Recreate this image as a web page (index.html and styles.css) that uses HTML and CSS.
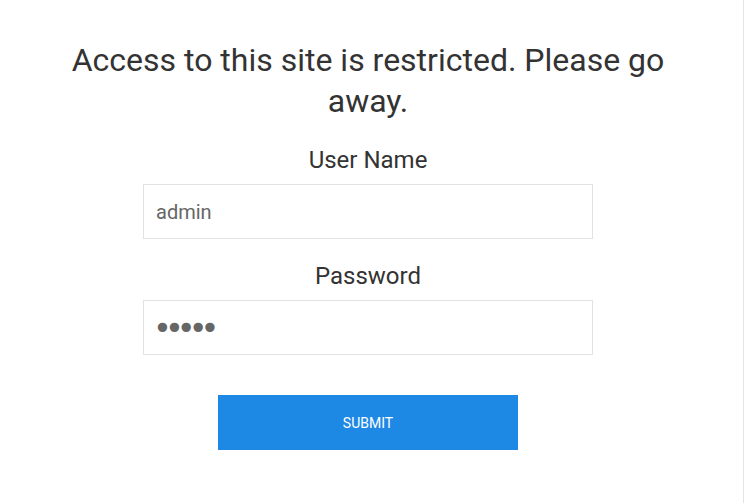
FILE: index.html
```html
<!DOCTYPE html>
<html lang="en">
<head>
<meta charset="utf-8">
<title>Restricted</title>
<link rel="stylesheet" href="styles.css">
</head>
<body>
<main class="page">
  <h1 class="title">Access to this site is restricted. Please go away.</h1>
  <form class="form" onsubmit="return false;">
    <label class="label" for="user">User Name</label>
    <input class="field" id="user" type="text" value="admin">
    <label class="label" for="pass">Password</label>
    <input class="field field-pass" id="pass" type="password" value="admin">
    <button class="submit" type="submit">SUBMIT</button>
  </form>
</main>
</body>
</html>
```
FILE: styles.css
```css
html, body {
  margin: 0;
  padding: 0;
  background: #ffffff;
}
body {
  font-family: Roboto, "Liberation Sans", sans-serif;
  color: #333333;
  min-height: 100vh;
  width: 743px;
  border-right: 1px solid #e4e4e4;
}
.page {
  width: 736px;
  display: flex;
  flex-direction: column;
  align-items: center;
  text-align: center;
  padding-top: 40px;
}
.title {
  margin: 0;
  max-width: 640px;
  font-size: 32px;
  font-weight: 400;
  line-height: 41px;
}
.form {
  width: 450px;
  display: flex;
  flex-direction: column;
  align-items: center;
  margin-top: 24px;
}
.label {
  display: block;
  font-size: 24px;
  line-height: 28px;
  margin-bottom: 10px;
}
.field {
  box-sizing: border-box;
  width: 450px;
  height: 55px;
  border: 1px solid #e2e2e2;
  border-radius: 0;
  padding: 0 12px;
  font-family: Roboto, "Liberation Sans", sans-serif;
  font-size: 20px;
  color: #666666;
  outline: none;
  margin-bottom: 23px;
  background: #fff;
}
.field-pass {
  font-family: "DejaVu Sans", sans-serif;
  font-size: 32px;
  letter-spacing: -7px;
  padding-left: 9px;
}
.submit {
  margin-top: 17px;
  width: 300px;
  height: 55px;
  border: none;
  border-radius: 0;
  background: #1e88e5;
  color: #ffffff;
  font-family: Roboto, "Liberation Sans", sans-serif;
  font-size: 14px;
  cursor: pointer;
}
```
